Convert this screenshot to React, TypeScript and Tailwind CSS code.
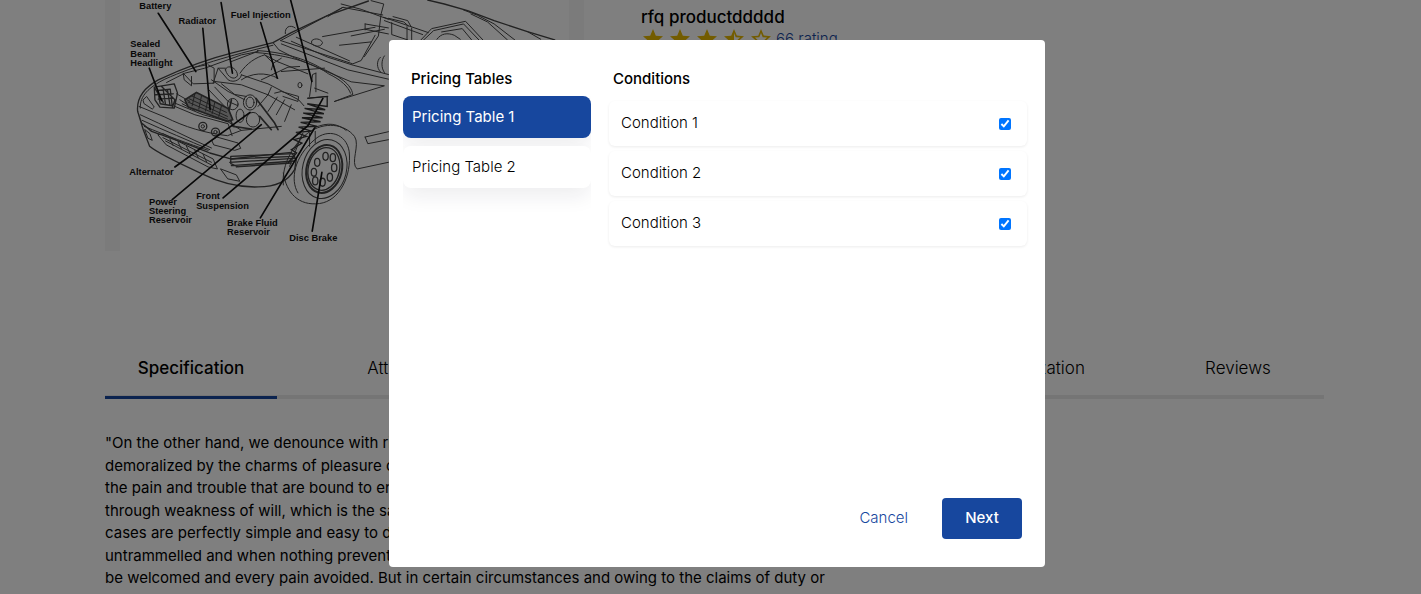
import { useState } from 'react';
import { MdStar, MdStarBorder, MdStarHalf } from 'react-icons/md';

const tabs = ['Specification', 'Attribute', 'Shipping', 'Warranty', 'Customization', 'Reviews'];

const pricingTables = [
  { id: 1, name: 'Pricing Table 1' },
  { id: 2, name: 'Pricing Table 2' },
];

const conditions = [
  { id: 'condition-1', name: 'Condition 1' },
  { id: 'condition-2', name: 'Condition 2' },
  { id: 'condition-3', name: 'Condition 3' },
];

const specification = [
  '"On the other hand, we denounce with righteous indignation and dislike men who are so',
  'demoralized by the charms of pleasure of the moment, so blinded by desire, that they',
  'the pain and trouble that are bound to ensue; and equal blame belongs to those who fail',
  'through weakness of will, which is the same as saying through shrinking from toil. These',
  'cases are perfectly simple and easy to distinguish. In a free hour, when our power is',
  'untrammelled and when nothing prevents our being able to do what we like best, is to',
  'be welcomed and every pain avoided. But in certain circumstances and owing to the claims of duty or',
];

const wheelHoles = [
  [693, 470], [715, 474], [719, 504], [706, 533],
  [684, 548], [662, 544], [658, 518], [668, 488],
];

const labels = [
  { x: 133, y: 28, text: 'Battery' },
  { x: 251, y: 72, text: 'Radiator' },
  { x: 408, y: 55, text: 'Fuel Injection' },
  { x: 106, y: 142, text: 'Sealed' },
  { x: 106, y: 170, text: 'Beam' },
  { x: 106, y: 198, text: 'Headlight' },
  { x: 103, y: 525, text: 'Alternator' },
  { x: 162, y: 615, text: 'Power' },
  { x: 162, y: 642, text: 'Steering' },
  { x: 162, y: 669, text: 'Reservoir' },
  { x: 304, y: 599, text: 'Front' },
  { x: 304, y: 627, text: 'Suspension' },
  { x: 397, y: 680, text: 'Brake Fluid' },
  { x: 397, y: 708, text: 'Reservoir' },
  { x: 584, y: 725, text: 'Disc Brake' },
];

function CarDiagram() {
  return (
    <svg viewBox="75 0 1350 756" className="block w-full bg-white" role="img" aria-label="Car parts diagram">
      <g fill="none" stroke="#444" strokeWidth="3" strokeLinejoin="round" strokeLinecap="round">
        {/* hood and windscreen */}
        <path d="M128 335C124 292 150 262 190 240C260 208 345 176 410 160L535 128L590 98L700 46L822 3" strokeWidth="4" />
        <path d="M136 325C134 288 162 262 210 238C300 198 400 168 535 136M215 248L270 220L330 205L440 165L490 155" />
        <path d="M488 152C560 156 632 176 680 205C735 230 770 252 775 284L720 305M484 158C590 166 665 195 702 222C740 240 762 262 768 280" />
        <path d="M535 128L553 150L600 174L770 246L870 258L720 305" />
        <path d="M558 122L745 22L865 45M558 122L775 192L800 182L842 106M745 22L700 50M590 124L700 172L776 196L882 224M605 112L765 183" />
        <path d="M560 132L760 210L882 238M740 12L800 28L882 58M830 2L868 12L860 42L852 108L810 170" />
        <path d="M572 101C570 82 585 72 602 84M652 122C662 112 680 118 684 128C680 142 662 142 652 132ZM684 110L842 82" />
        <path d="M735 136L830 126M770 108L870 88" />
        <path d="M812 72L882 84M812 88L882 102M812 72V90M858 172C846 182 846 204 858 216M870 168C860 180 860 206 870 218" />
        {/* roof line */}
        <path d="M1000 0L1050 12L1120 32L1200 62L1300 95L1382 120" strokeWidth="4" />
        <path d="M1108 30L1150 46L1200 72L1262 120M1130 42L1180 66L1240 120M1300 95L1340 118" />
        <path d="M978 122L1012 86L1114 64L1168 122M986 122L1018 92L1108 72L1156 122M1028 118C1040 100 1060 98 1080 106L1098 118M1042 96L1104 86L1134 122" />
        <path d="M868 52L1002 98M870 62L985 104M882 55L928 66L942 78M896 50L940 62L950 80M892 68V104L940 120M938 80V120M952 84V122" />
        {/* engine bay */}
        <path d="M265 220L295 252L358 250V205L340 195M265 220L268 240L290 258L290 230M300 202L335 195M355 250L370 205L392 205" />
        <path d="M392 210C396 190 430 205 428 228C420 242 398 234 392 210ZM370 205L400 240C420 252 440 236 440 225M410 185L488 155M436 220C455 190 485 172 510 165L550 186" />
        <path d="M440 225L520 252L612 300L628 318M360 245L440 255L520 285L600 330M520 285L530 262M440 240C470 220 510 215 550 235M500 240L580 202L615 200" />
        <path d="M510 165L536 190L530 210M536 190L560 175M540 280L560 275L612 290L610 305L565 290M520 285L490 320M548 292L520 335M570 300L545 345M590 315L570 365" />
        <path d="M664 220L654 224L645 290M664 220V276M640 295L700 290M660 265L700 280" />
        <path d="M380 252L420 284L455 290M360 262L400 305L430 318M340 268L390 320M350 240L400 275L450 300M550 186L640 222M560 215L690 205" />
        <ellipse cx="616" cy="256" rx="6" ry="8" />
        <ellipse cx="466" cy="308" rx="20" ry="23" />
        <ellipse cx="466" cy="308" rx="12" ry="16" />
        <ellipse cx="414" cy="313" rx="16" ry="17" />
        <ellipse cx="436" cy="348" rx="12" ry="20" />
        <ellipse cx="475" cy="360" rx="20" ry="22" />
        <path d="M484 296L540 370L550 390M495 350L530 390M400 345L415 380L470 388M410 300L400 345" strokeWidth="5" />
        {/* radiator grille */}
        <path d="M270 300L305 278L400 326L414 360L398 365L280 322Z" fill="#aaa" strokeWidth="5" />
        <path d="M290 288L395 338M283 297L398 350M280 307L398 358M300 282L292 318M320 288L312 328M340 298L332 334M360 308L352 342M380 318L372 350" />
        <path d="M245 282L285 305M240 320L300 345L400 372L412 408M255 300L278 315M262 312L300 332" />
        {/* headlight */}
        <path d="M178 262L238 252L248 280L238 325L195 322L180 300ZM188 272L226 268L232 318L196 312ZM200 260L240 300L232 325M178 262L205 308M182 285L235 282M190 298L235 295M205 270L212 315M218 270L225 315" strokeWidth="4" />
        {/* nose and bumper */}
        <path d="M128 335L140 370L170 395C240 420 300 440 345 460L408 478L590 458L605 480L600 510C580 545 540 562 490 562C430 564 380 552 320 522C250 490 190 462 164 440L145 390Z" strokeWidth="4" />
        <path d="M132 320L210 352C270 382 330 400 398 408L440 392L560 380M136 345C210 378 280 415 350 445M142 362C212 394 280 422 345 450M148 380C220 410 280 432 340 452" />
        <path d="M240 310L325 345L398 365L440 392M145 300L155 290L178 322L172 328L148 312ZM150 390L165 402L172 422L160 416Z" />
        <path d="M190 405L205 402L355 478L368 508L340 502L215 436ZM204 414L350 488M212 424L350 496M225 418L235 438M250 428L260 448M275 440L285 460M300 452L310 474M325 464L335 486" />
        <path d="M408 470L600 462M408 478L600 470M405 488L600 476M410 498L600 484M425 502L590 490M408 470V492L430 502" strokeWidth="4" />
        <path d="M378 508L425 526L435 545L400 538ZM352 422L366 412L430 430L438 446L420 452L358 436Z" />
        <circle cx="324" cy="380" r="12" strokeWidth="4" />
        <circle cx="324" cy="380" r="5" />
        <circle cx="362" cy="397" r="12" strokeWidth="4" />
        <circle cx="362" cy="397" r="5" />
        {/* wheel and arch */}
        <path d="M566 556C560 490 600 430 640 400C690 364 750 372 780 410C798 436 766 490 788 508L882 488M660 384C700 366 730 372 755 392" />
        <path d="M566 520C575 580 612 620 675 612C735 604 772 530 764 455C756 402 700 384 660 420C600 470 585 540 610 580" />
        <ellipse cx="690" cy="508" rx="66" ry="90" transform="rotate(14 690 508)" />
        <ellipse cx="689" cy="508" rx="53" ry="73" strokeWidth="6" transform="rotate(14 689 508)" />
        <ellipse cx="688" cy="508" rx="47" ry="65" strokeWidth="4" transform="rotate(14 688 508)" />
        {wheelHoles.map(([cx, cy]) => (
          <ellipse key={`${cx}-${cy}`} cx={cx} cy={cy} rx="8" ry="12" strokeWidth="4" />
        ))}
        <path d="M812 412L882 396M812 412L820 432L882 420M645 400V440M662 395V430M600 450L625 400M585 500L620 410" />
      </g>
      {/* coil spring */}
      <path
        d="M638 296L698 290L698 320L638 312L692 330L630 326L688 342L626 340L684 354L622 354L678 366L618 368L668 380L612 382L650 394L604 398L636 410L598 420L622 430L590 450L606 460L580 490"
        fill="none"
        stroke="#333"
        strokeWidth="4"
      />
      <g stroke="#111" strokeWidth="5" strokeLinecap="round">
        <path d="M190 40L303 215M379 8L413 220M324 85L346 330M498 68L548 235M588 0L652 245M163 205L200 302" />
        <path d="M240 502L466 338M232 600L500 375M385 595L640 378L685 296M497 655L660 385M653 695L682 518" fill="none" />
      </g>
      <g fill="#111" fontFamily="Liberation Sans, Arial, sans-serif" fontWeight="700" fontSize="28">
        {labels.map((label) => (
          <text key={`${label.x}-${label.y}`} x={label.x} y={label.y}>
            {label.text}
          </text>
        ))}
      </g>
    </svg>
  );
}

function ProductPage() {
  return (
    <div className="pl-[105px] pr-[97px]">
      <div className="flex items-start gap-[57px]">
        <div className="w-[479px] shrink-0 bg-[#f7f7f7] px-[15px]">
          <CarDiagram />
        </div>
        <div className="pt-[7px]">
          <h1 className="text-[17px] leading-5 font-medium">rfq productddddd</h1>
          <div className="flex items-center gap-[3px]">
            <MdStar size={24} className="text-[#e6b800]" />
            <MdStar size={24} className="text-[#e6b800]" />
            <MdStar size={24} className="text-[#e6b800]" />
            <MdStarHalf size={24} className="text-[#e6b800]" />
            <MdStarBorder size={24} className="text-[#e6b800]" />
            <a href="#reviews" className="text-[#17479e]">66 rating</a>
          </div>
        </div>
      </div>

      <div className="mt-[87px] flex justify-between border-b-4 border-[#ebebeb] text-[17px] leading-[26px]">
        {tabs.map((tab, index) => (
          <button
            key={tab}
            className={
              index === 0
                ? '-mb-1 w-[172px] border-b-3 border-[#17479e] pt-[17px] pb-[15px] font-medium'
                : 'w-[172px] pt-[17px] pb-[14px]'
            }
          >
            {tab}
          </button>
        ))}
      </div>

      <p className="mt-[33px] leading-normal font-normal whitespace-nowrap">
        {specification.map((line) => (
          <span key={line} className="block">
            {line}
          </span>
        ))}
      </p>
    </div>
  );
}

function PricingModal() {
  const [selected, setSelected] = useState(1);

  return (
    <div role="dialog" aria-modal="true" className="flex min-h-[527px] w-full max-w-[656px] flex-col rounded bg-white pt-7 pr-[18px] pb-7 pl-[14px]">
      <div className="flex flex-1 gap-[18px]">
        <section className="w-[188px]">
          <h2 className="px-2 leading-[22px] font-medium">Pricing Tables</h2>
          <div className="mt-[6px] flex flex-col gap-2 overflow-hidden pb-7">
            {pricingTables.map((table) => (
              <button
                key={table.id}
                onClick={() => setSelected(table.id)}
                className={
                  selected === table.id
                    ? 'h-[42px] rounded-lg bg-[#17479e] px-[9px] text-left font-normal text-white shadow-[0_10px_20px_-2px_rgba(20,30,50,0.08)]'
                    : 'h-[42px] rounded-lg bg-white px-[9px] text-left shadow-[0_10px_20px_-2px_rgba(20,30,50,0.08)]'
                }
              >
                {table.name}
              </button>
            ))}
          </div>
        </section>

        <section className="flex-1">
          <h2 className="px-1 leading-[22px] font-medium">Conditions</h2>
          <div className="mt-[11px] flex flex-col gap-[5px]">
            {conditions.map((condition) => (
              <label
                key={condition.id}
                htmlFor={condition.id}
                className="flex h-[45px] items-center justify-between rounded-md pr-4 pl-3 shadow-[0_1px_3px_rgba(0,0,0,0.08)]"
              >
                {condition.name}
                <input id={condition.id} type="checkbox" defaultChecked className="size-3" />
              </label>
            ))}
          </div>
        </section>
      </div>

      <div className="flex justify-end gap-[10px] pr-[5px]">
        <button className="h-[41px] px-6 text-[#17479e]">Cancel</button>
        <button className="h-[41px] w-20 rounded bg-[#17479e] font-medium text-white">Next</button>
      </div>
    </div>
  );
}

export default function App() {
  return (
    <div className="h-screen overflow-hidden bg-white font-['Inter',sans-serif] text-[15px] font-light text-black">
      <ProductPage />
      <div className="fixed inset-0 flex items-start justify-center bg-black/50 pt-10 pl-[13px]">
        <PricingModal />
      </div>
    </div>
  );
}
